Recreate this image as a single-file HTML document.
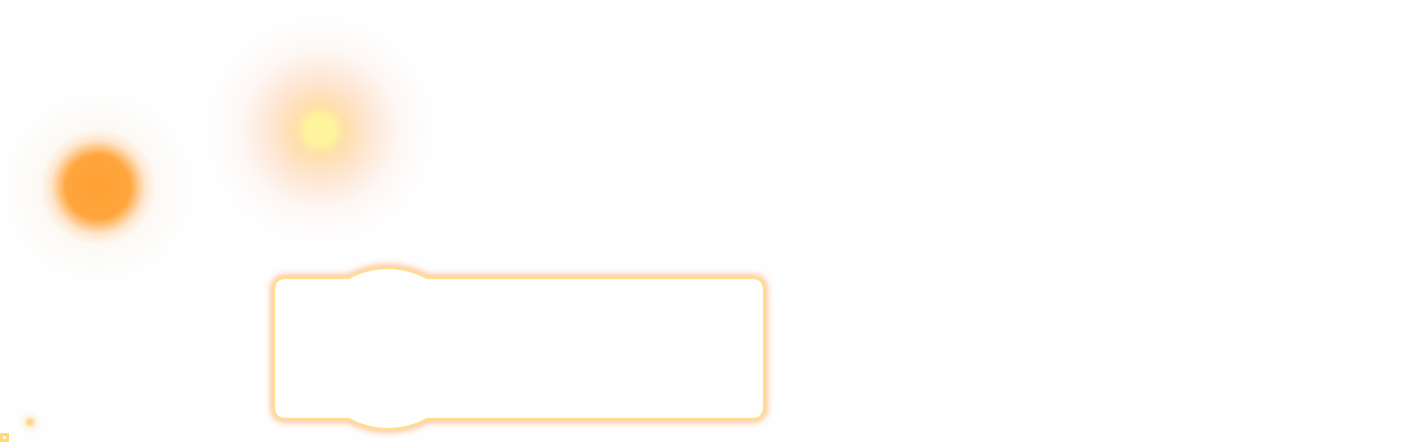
<!DOCTYPE html>
<html><head><meta charset="utf-8"><style>
html,body{margin:0;padding:0;width:1407px;height:442px;overflow:hidden;background:#fefefe;}
.g{position:absolute;border-radius:50%;}
</style></head><body>
<div class="g" style="left:3px;top:92px;width:190px;height:190px;background:radial-gradient(circle,rgba(255,155,40,0.95) 0px,rgba(255,158,45,0.92) 32px,rgba(255,175,90,0.3) 47px,rgba(245,215,180,0.12) 58px,rgba(240,232,215,0.08) 80px,rgba(255,255,255,0) 95px);"></div>
<div class="g" style="left:205px;top:15px;width:230px;height:230px;background:radial-gradient(circle,#fff5a0 0px,#fff39c 14px,rgba(255,215,150,0.8) 25px,rgba(255,195,150,0.4) 50px,rgba(255,210,190,0.15) 80px,rgba(255,235,225,0.05) 105px,rgba(255,255,255,0) 115px);"></div>
<div class="g" style="left:18px;top:410px;width:24px;height:24px;background:radial-gradient(circle,rgba(255,190,70,0.8) 0px,rgba(255,190,70,0.6) 2px,rgba(255,210,140,0.2) 6px,rgba(255,255,255,0) 12px);"></div>
<div style="position:absolute;left:0;top:433px;width:9px;height:9px;background:#ffd97a;"></div>
<div style="position:absolute;left:3px;top:436px;width:3px;height:3px;background:#fff;"></div>
<svg width="1407" height="442" style="position:absolute;left:0;top:0">
<defs><filter id="f" x="-10%" y="-20%" width="120%" height="140%"><feGaussianBlur stdDeviation="3.5"/></filter></defs>
<path d="M286,278 H349 A81 81 0 0 1 427 278 H752 Q764 278 764 290 V407 Q764 419 752 419 H427 A81 81 0 0 1 349 419 H286 Q274 419 274 407 V290 Q274 278 286 278 Z" fill="none" stroke="#ffa868" stroke-width="6" opacity="0.85" filter="url(#f)"/>
<path d="M286,278 H349 A81 81 0 0 1 427 278 H752 Q764 278 764 290 V407 Q764 419 752 419 H427 A81 81 0 0 1 349 419 H286 Q274 419 274 407 V290 Q274 278 286 278 Z" fill="#fefefe" stroke="#ffdf8c" stroke-width="2.2"/>
</svg>
</body></html>
